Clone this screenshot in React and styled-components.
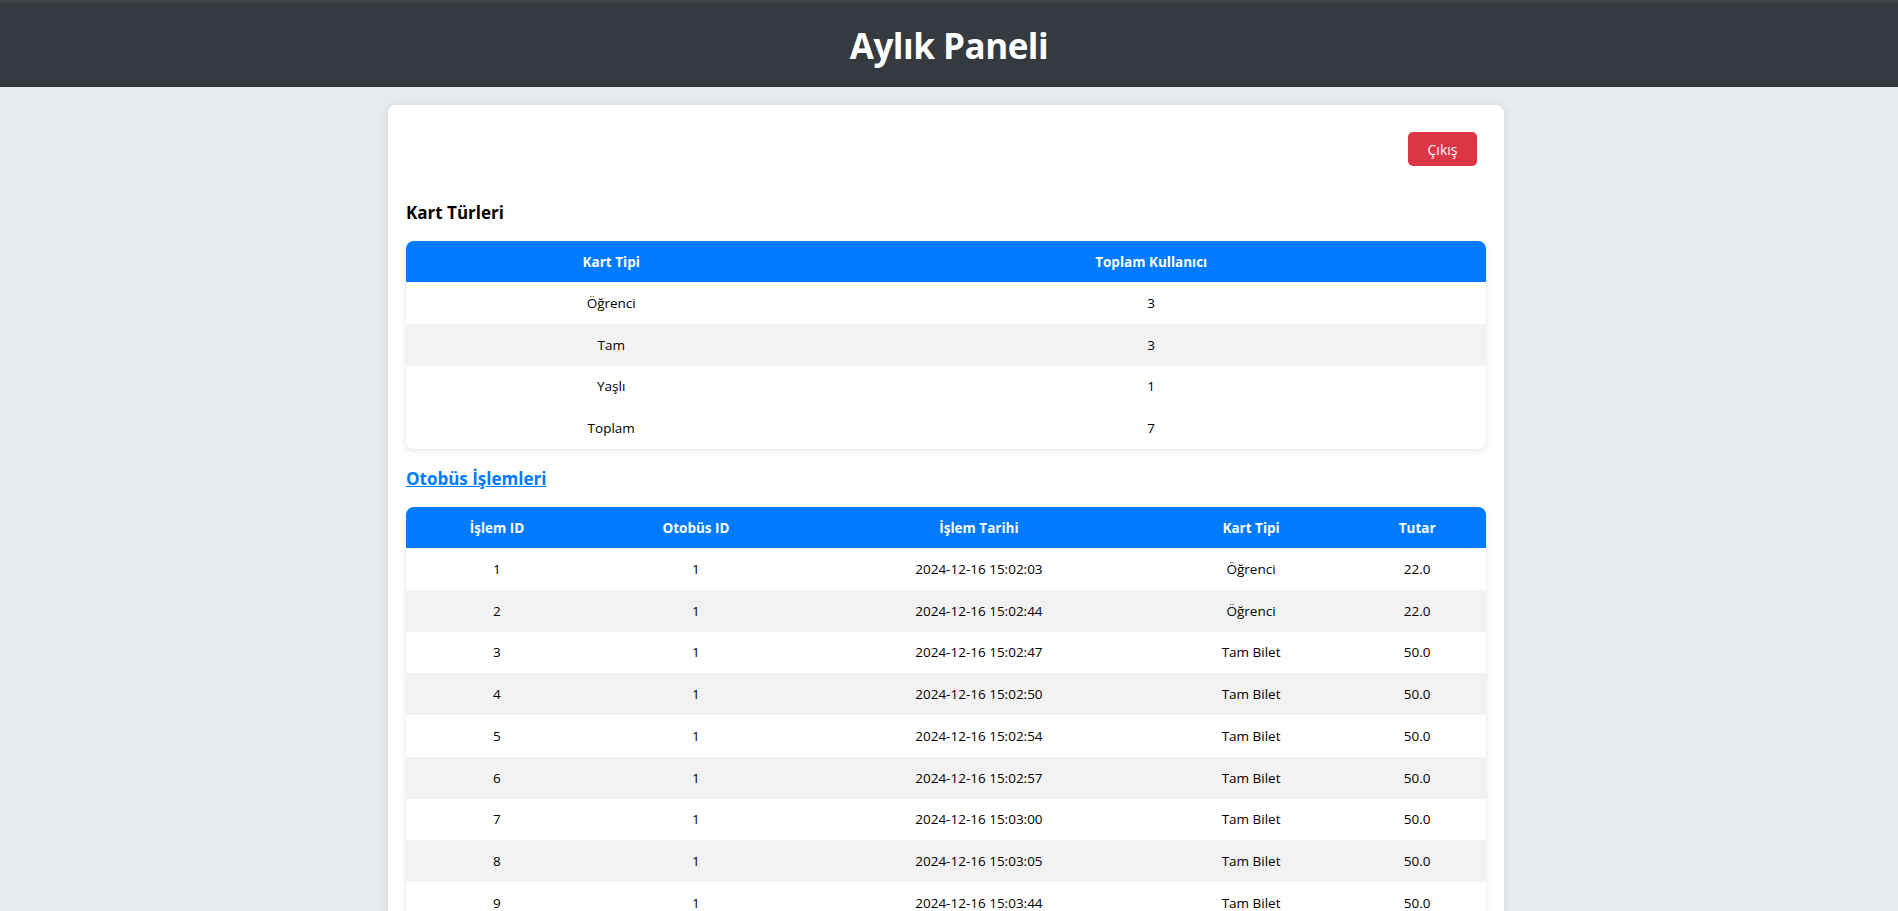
import React from "react";
import styled, { createGlobalStyle } from "styled-components";

const GlobalStyle = createGlobalStyle`
  body {
    margin: 0;
    background-color: #e9ecef;
    font-family: "Open Sans", "Noto Sans", sans-serif;
    color: #000;
  }
`;

const cardTypes = [
  { type: "Öğrenci", total: 3 },
  { type: "Tam", total: 3 },
  { type: "Yaşlı", total: 1 },
];

const times = [
  "15:02:03",
  "15:02:44",
  "15:02:47",
  "15:02:50",
  "15:02:54",
  "15:02:57",
  "15:03:00",
  "15:03:05",
  "15:03:44",
  "15:03:51",
];

const transactions = times.map((t, i) => ({
  id: i + 1,
  bus: 1,
  date: "2024-12-16 " + t,
  card: i < 2 ? "Öğrenci" : "Tam Bilet",
  amount: i < 2 ? "22.0" : "50.0",
}));

export default function App() {
  const total = cardTypes.reduce((sum, c) => sum + c.total, 0);
  return (
    <>
      <GlobalStyle />
      <Header>
        <Title>Aylık Paneli</Title>
      </Header>
      <Card>
        <Actions>
          <LogoutButton>Çıkış</LogoutButton>
        </Actions>
        <SectionTitle>Kart Türleri</SectionTitle>
        <Table>
          <colgroup>
            <col style={{ width: "38%" }} />
            <col style={{ width: "62%" }} />
          </colgroup>
          <thead>
            <tr>
              <Th>Kart Tipi</Th>
              <Th>Toplam Kullanıcı</Th>
            </tr>
          </thead>
          <tbody>
            {cardTypes.map((c) => (
              <Row key={c.type}>
                <Td>{c.type}</Td>
                <Td>{c.total}</Td>
              </Row>
            ))}
          </tbody>
          <tfoot>
            <tr>
              <Td>Toplam</Td>
              <Td>{total}</Td>
            </tr>
          </tfoot>
        </Table>
        <SectionTitle>
          <SectionLink href="#">Otobüs İşlemleri</SectionLink>
        </SectionTitle>
        <Table>
          <colgroup>
            <col style={{ width: "16.85%" }} />
            <col style={{ width: "20%" }} />
            <col style={{ width: "32.4%" }} />
            <col style={{ width: "18%" }} />
            <col style={{ width: "12.75%" }} />
          </colgroup>
          <thead>
            <tr>
              <Th>İşlem ID</Th>
              <Th>Otobüs ID</Th>
              <Th>İşlem Tarihi</Th>
              <Th>Kart Tipi</Th>
              <Th>Tutar</Th>
            </tr>
          </thead>
          <tbody>
            {transactions.map((t) => (
              <Row key={t.id}>
                <Td>{t.id}</Td>
                <Td>{t.bus}</Td>
                <Td>{t.date}</Td>
                <Td>{t.card}</Td>
                <Td>{t.amount}</Td>
              </Row>
            ))}
          </tbody>
        </Table>
      </Card>
    </>
  );
}

const Header = styled.header`
  background-color: #343a40;
  border-top: 3px solid #3e4144;
  height: 84px;
  display: flex;
  justify-content: center;
  align-items: center;
`;
const Title = styled.h1`
  margin: 0;
  color: white;
  font-size: 35px;
  font-weight: 700;
  letter-spacing: -0.5px;
`;
const Card = styled.main`
  box-sizing: border-box;
  width: 1116px;
  margin: 18px 0 18px calc((100% - 1116px) / 2 - 3px);
  padding: 18px;
  background-color: white;
  border-radius: 8px;
  box-shadow: 0 0 10px rgba(0, 0, 0, 0.1);
`;
const Actions = styled.div`
  display: flex;
  justify-content: flex-end;
`;
const LogoutButton = styled.button`
  margin: 9px;
  width: 69px;
  height: 34px;
  border: none;
  border-radius: 5px;
  background-color: #dc3545;
  color: white;
  font-family: inherit;
  font-size: 14px;
  cursor: pointer;
`;
const SectionTitle = styled.h3`
  margin: 26px 0 16px;
  font-size: 17px;
  line-height: 24px;
  font-weight: 700;
`;
const SectionLink = styled.a`
  color: #007bff;
  text-decoration: underline;
`;
const Table = styled.table`
  width: 100%;
  table-layout: fixed;
  border-collapse: collapse;
  border-radius: 8px;
  overflow: hidden;
  box-shadow: 0 2px 6px rgba(0, 0, 0, 0.1);
  margin-bottom: 18px;
  & + h3 {
    margin-top: 0;
  }
`;
const Th = styled.th`
  background-color: #007bff;
  color: white;
  font-size: 13.5px;
  font-weight: 700;
  height: 41px;
  padding: 0 12px;
  text-align: center;
`;
const Row = styled.tr`
  &:nth-child(even) {
    background-color: #f2f2f2;
  }
`;
const Td = styled.td`
  font-size: 13.5px;
  height: 41.75px;
  padding: 0 12px;
  text-align: center;
`;
